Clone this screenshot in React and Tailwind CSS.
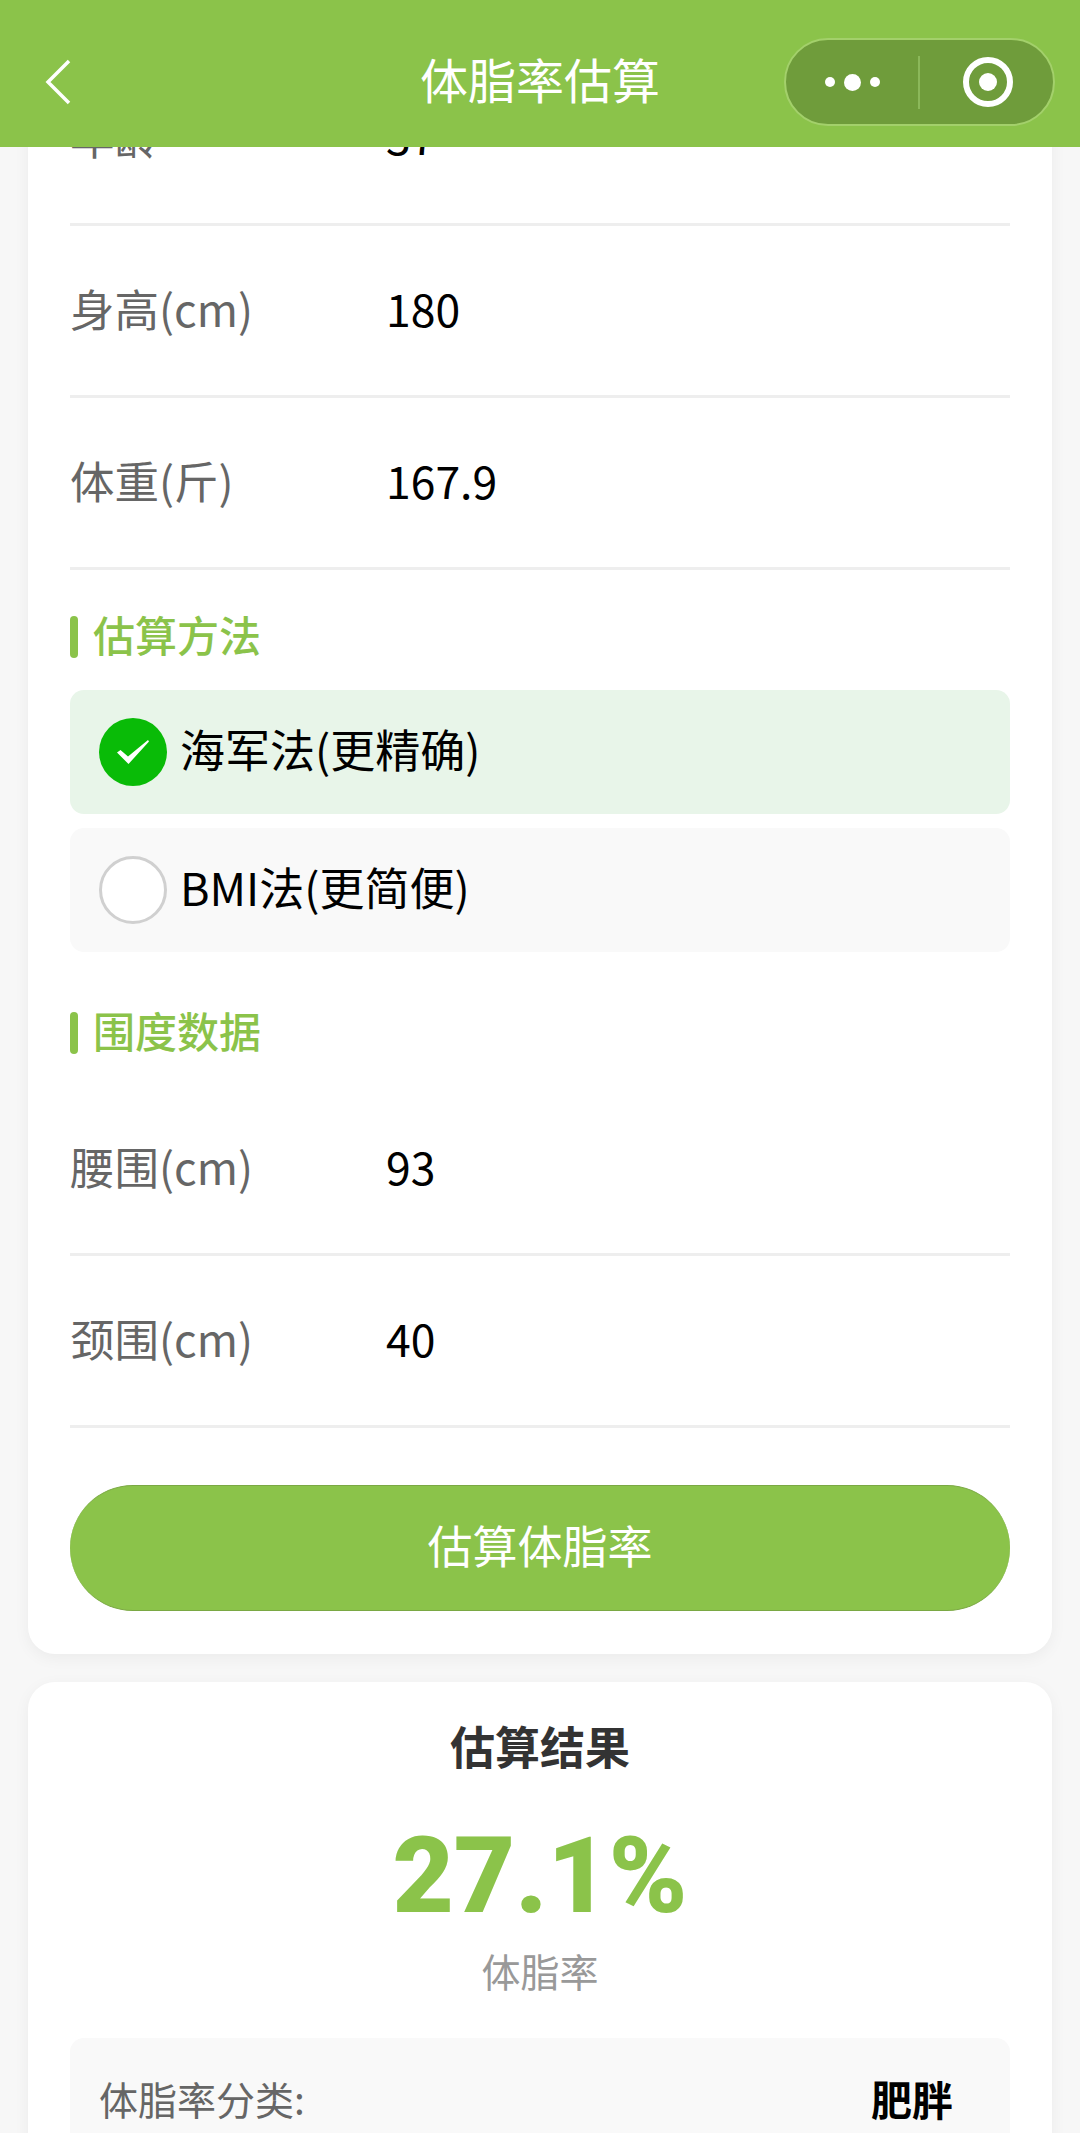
const font = "font-['Noto_Sans_CJK_SC','Noto_Sans',sans-serif]"

const Row = ({ label, value }) => (
  <div className="flex h-[172px] items-center border-b-[3px] border-[#eeeeee] pb-[5px]">
    <span className="w-[316px] text-[44.5px] leading-none text-[#666666]">{label}</span>
    <span className="text-[44.5px] leading-none text-black">{value}</span>
  </div>
)

const SectionTitle = ({ children, className }) => (
  <div className={`flex h-[42px] items-center gap-[15px] ${className}`}>
    <div className="h-full w-[8px] rounded-[4px] bg-[#8bc34a]" />
    <span className="pb-[7px] text-[42px] font-medium leading-none text-[#8bc34a]">{children}</span>
  </div>
)

const Option = ({ checked, label }) => (
  <div className={`flex h-[124px] items-center gap-[13px] rounded-[14px] pl-[29px] ${checked ? 'bg-[#e8f5e9]' : 'bg-[#f9f9f9]'}`}>
    {checked ? (
      <div className="flex h-[68px] w-[68px] items-center justify-center rounded-full bg-[#09bb07]">
        <svg width="34" height="26" viewBox="0 0 34 26" fill="none">
          <path d="M1 13.5 L4.5 11 L12 17.5 L32 1 L33 2.5 L12.5 25 Z" fill="#ffffff" />
        </svg>
      </div>
    ) : (
      <div className="h-[68px] w-[68px] rounded-full border-[3px] border-[#d0d0d0] bg-white" />
    )}
    <span className="pb-[8px] text-[45px] leading-none text-black">{label}</span>
  </div>
)

export default function App() {
  return (
    <div className={`flex h-[2133px] w-[1080px] flex-col overflow-hidden bg-[#f7f7f7] ${font}`}>
      <header className="relative z-10 flex h-[147px] shrink-0 items-center justify-center bg-[#8bc34a] pt-[8px]">
        <svg className="absolute left-[44px] top-[58px]" width="28" height="48" viewBox="0 0 28 48" fill="none">
          <path d="M25 3 L4 24 L25 45" stroke="#ffffff" strokeWidth="3.5" />
        </svg>
        <span className="text-[48px] leading-none text-white">体脂率估算</span>
        <div className="absolute left-[784px] top-[38px] flex h-[88px] w-[271px] items-center rounded-full border-2 border-[#a3d06b] bg-[#6f9c3b]">
          <div className="flex w-[132px] items-center justify-center gap-[9px]">
            <div className="h-[10px] w-[10px] rounded-full bg-white" />
            <div className="h-[17px] w-[17px] rounded-full bg-white" />
            <div className="h-[10px] w-[10px] rounded-full bg-white" />
          </div>
          <div className="h-[53px] w-[2px] bg-[#8bb85a]" />
          <div className="flex flex-1 items-center justify-center pl-[3px]">
            <div className="flex h-[50px] w-[50px] items-center justify-center rounded-full border-[6px] border-white">
              <div className="h-[18px] w-[18px] rounded-full bg-white" />
            </div>
          </div>
        </div>
      </header>

      <main className="flex flex-1 flex-col gap-[28px] overflow-hidden px-[28px]">
        <section className="-mt-[93px] shrink-0 rounded-[27px] bg-white px-[42px] pb-[43px] shadow-[0_4px_16px_rgba(0,0,0,0.05)]">
          <Row label="年龄" value="37" />
          <Row label="身高(cm)" value="180" />
          <Row label="体重(斤)" value="167.9" />

          <SectionTitle className="mt-[46px]">估算方法</SectionTitle>
          <div className="mt-[32px] flex flex-col gap-[14px]">
            <Option checked label="海军法(更精确)" />
            <Option label="BMI法(更简便)" />
          </div>

          <SectionTitle className="mt-[60px]">围度数据</SectionTitle>
          <div className="mt-[30px]">
            <Row label="腰围(cm)" value="93" />
            <Row label="颈围(cm)" value="40" />
          </div>

          <button className="mt-[57px] flex h-[126px] w-full items-center justify-center rounded-full border-y border-[#7aa843] bg-[#8bc34a] pb-[8px] text-[45px] leading-none text-white">
            估算体脂率
          </button>
        </section>

        <section className="shrink-0 rounded-[27px] bg-white px-[42px] pb-[40px] pt-[41px] shadow-[0_4px_16px_rgba(0,0,0,0.05)]">
          <h2 className="text-center text-[45px] font-bold leading-[46px] text-[#333333]">估算结果</h2>
          <div className="mt-[52px] text-center font-['Roboto',sans-serif] text-[106px] font-black leading-[110px] text-[#8bc34a]">27.1%</div>
          <div className="mt-[19px] text-center text-[39px] leading-[40px] text-[#999999]">体脂率</div>
          <div className="mt-[48px] rounded-[14px] bg-[#f9f9f9] px-[29px] pb-[40px] pt-[38px]">
            <div className="flex items-center justify-between pr-[28px]">
              <span className="text-[39px] leading-[44px] text-[#666666]">体脂率分类:</span>
              <span className="text-[41px] font-bold leading-[44px] text-black">肥胖</span>
            </div>
          </div>
        </section>
      </main>
    </div>
  )
}
